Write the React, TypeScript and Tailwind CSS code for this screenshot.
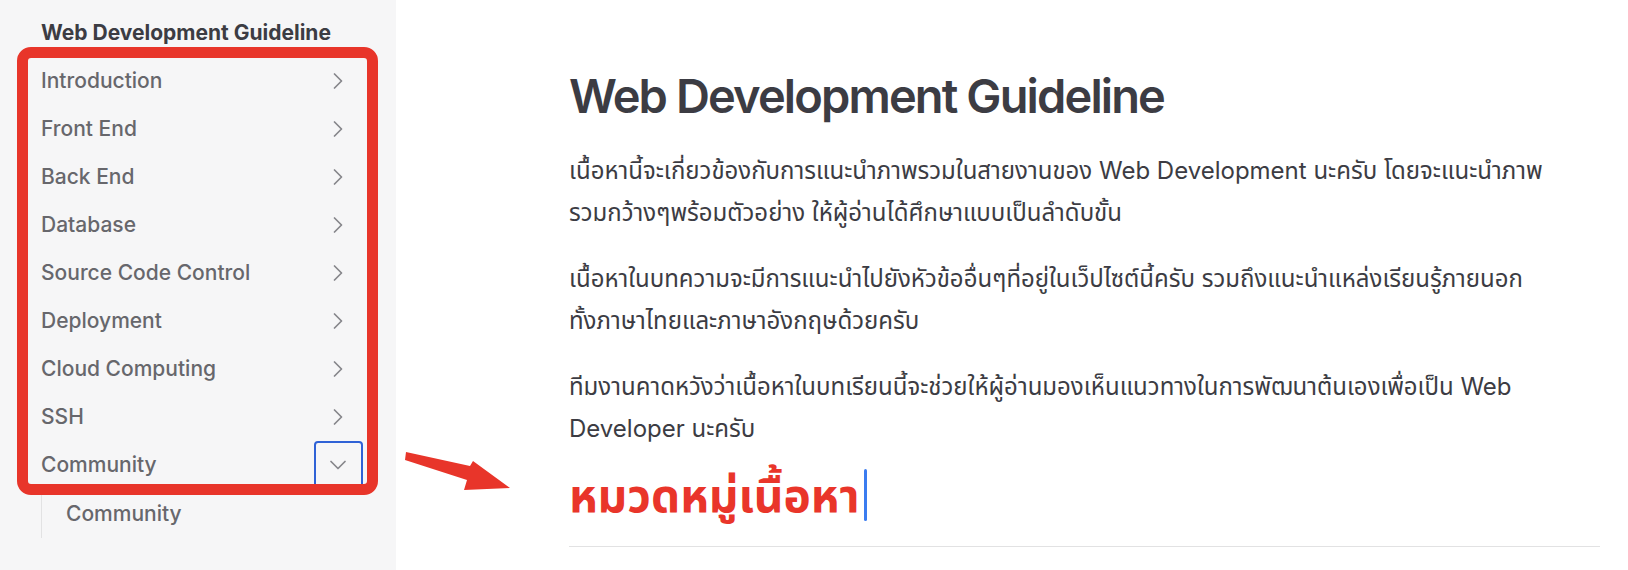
import { ChevronRight, ChevronDown } from "lucide-react";

const items = [
  "Introduction",
  "Front End",
  "Back End",
  "Database",
  "Source Code Control",
  "Deployment",
  "Cloud Computing",
  "SSH",
];

const font = { fontFamily: "Inter, 'Noto Sans', 'Noto Sans Thai', 'Liberation Sans', sans-serif" };

export default function App() {
  return (
    <div className="relative flex w-[1628px] h-[570px] overflow-hidden bg-white" style={font}>
      {/* sidebar */}
      <aside className="relative w-[396px] shrink-0 h-full bg-[#f6f6f7] pl-[41px] pr-[34px] pt-[9px]">
        <div className="h-[48px] flex items-center text-[21px] font-bold text-[#3c3c43]">
          Web Development Guideline
        </div>
        {items.map((item) => (
          <div key={item} className="h-[48px] flex items-center justify-between">
            <span className="text-[21px] font-medium text-[#67676c]">{item}</span>
            <span className="w-[48px] h-[48px] flex items-center justify-center text-[#86868b]">
              <ChevronRight size={28} strokeWidth={1.5} />
            </span>
          </div>
        ))}
        <div className="relative h-[48px] flex items-center justify-between">
          <span className="text-[21px] font-medium text-[#67676c]">Community</span>
          <span className="w-[48px] h-[48px] flex items-center justify-center text-[#86868b]">
            <ChevronDown size={28} strokeWidth={1.5} />
          </span>
          <span className="absolute right-[-1px] top-0 w-[49px] h-[48px] border-2 border-[#2f62d6] rounded-[4px]" />
        </div>
        <div className="border-l border-[#e2e2e3] pl-[24px]">
          <div className="h-[49px] flex items-center text-[21px] font-medium text-[#67676c]">Community</div>
        </div>

        {/* annotation box */}
        <div className="absolute left-[17px] top-[47px] w-[361px] h-[448px] border-[11px] border-[#e8352a] rounded-[14px]" />
      </aside>

      {/* content */}
      <main className="flex-1 pl-[173px] pr-[28px] pt-[66px] text-[#3c3c43]">
        <h1 className="text-[47px] leading-[60px] font-semibold tracking-[-0.04em]">Web Development Guideline</h1>
        <p className="mt-[24px] text-[24px] leading-[42px]">
          เนื้อหานี้จะเกี่ยวข้องกับการแนะนำภาพรวมในสายงานของ Web Development นะครับ โดยจะแนะนำภาพ
          <br />
          รวมกว้างๆพร้อมตัวอย่าง ให้ผู้อ่านได้ศึกษาแบบเป็นลำดับขั้น
        </p>
        <p className="mt-[24px] text-[24px] leading-[42px]">
          เนื้อหาในบทความจะมีการแนะนำไปยังหัวข้ออื่นๆที่อยู่ในเว็ปไซต์นี้ครับ รวมถึงแนะนำแหล่งเรียนรู้ภายนอก
          <br />
          ทั้งภาษาไทยและภาษาอังกฤษด้วยครับ
        </p>
        <p className="mt-[24px] text-[24px] leading-[42px]">
          ทีมงานคาดหวังว่าเนื้อหาในบทเรียนนี้จะช่วยให้ผู้อ่านมองเห็นแนวทางในการพัฒนาต้นเองเพื่อเป็น Web
          <br />
          Developer นะครับ
        </p>
        <h2 className="mt-[19px] flex items-center h-[52px] text-[46px] font-bold text-[#e9352a]">
          หมวดหมู่เนื้อหา
          <span className="ml-[4px] w-[3px] h-[52px] rounded-full bg-[#3b7cf0]" />
        </h2>
        <div className="mt-[25px] border-t border-[#e2e2e3]" />
      </main>

      {/* arrow */}
      <svg className="absolute left-[400px] top-[445px]" width="115" height="50" viewBox="0 0 115 50">
        <polygon points="6,7 70,21 73,16 110,43 64,45 67,35 5,15" fill="#e8352a" />
      </svg>
    </div>
  );
}
